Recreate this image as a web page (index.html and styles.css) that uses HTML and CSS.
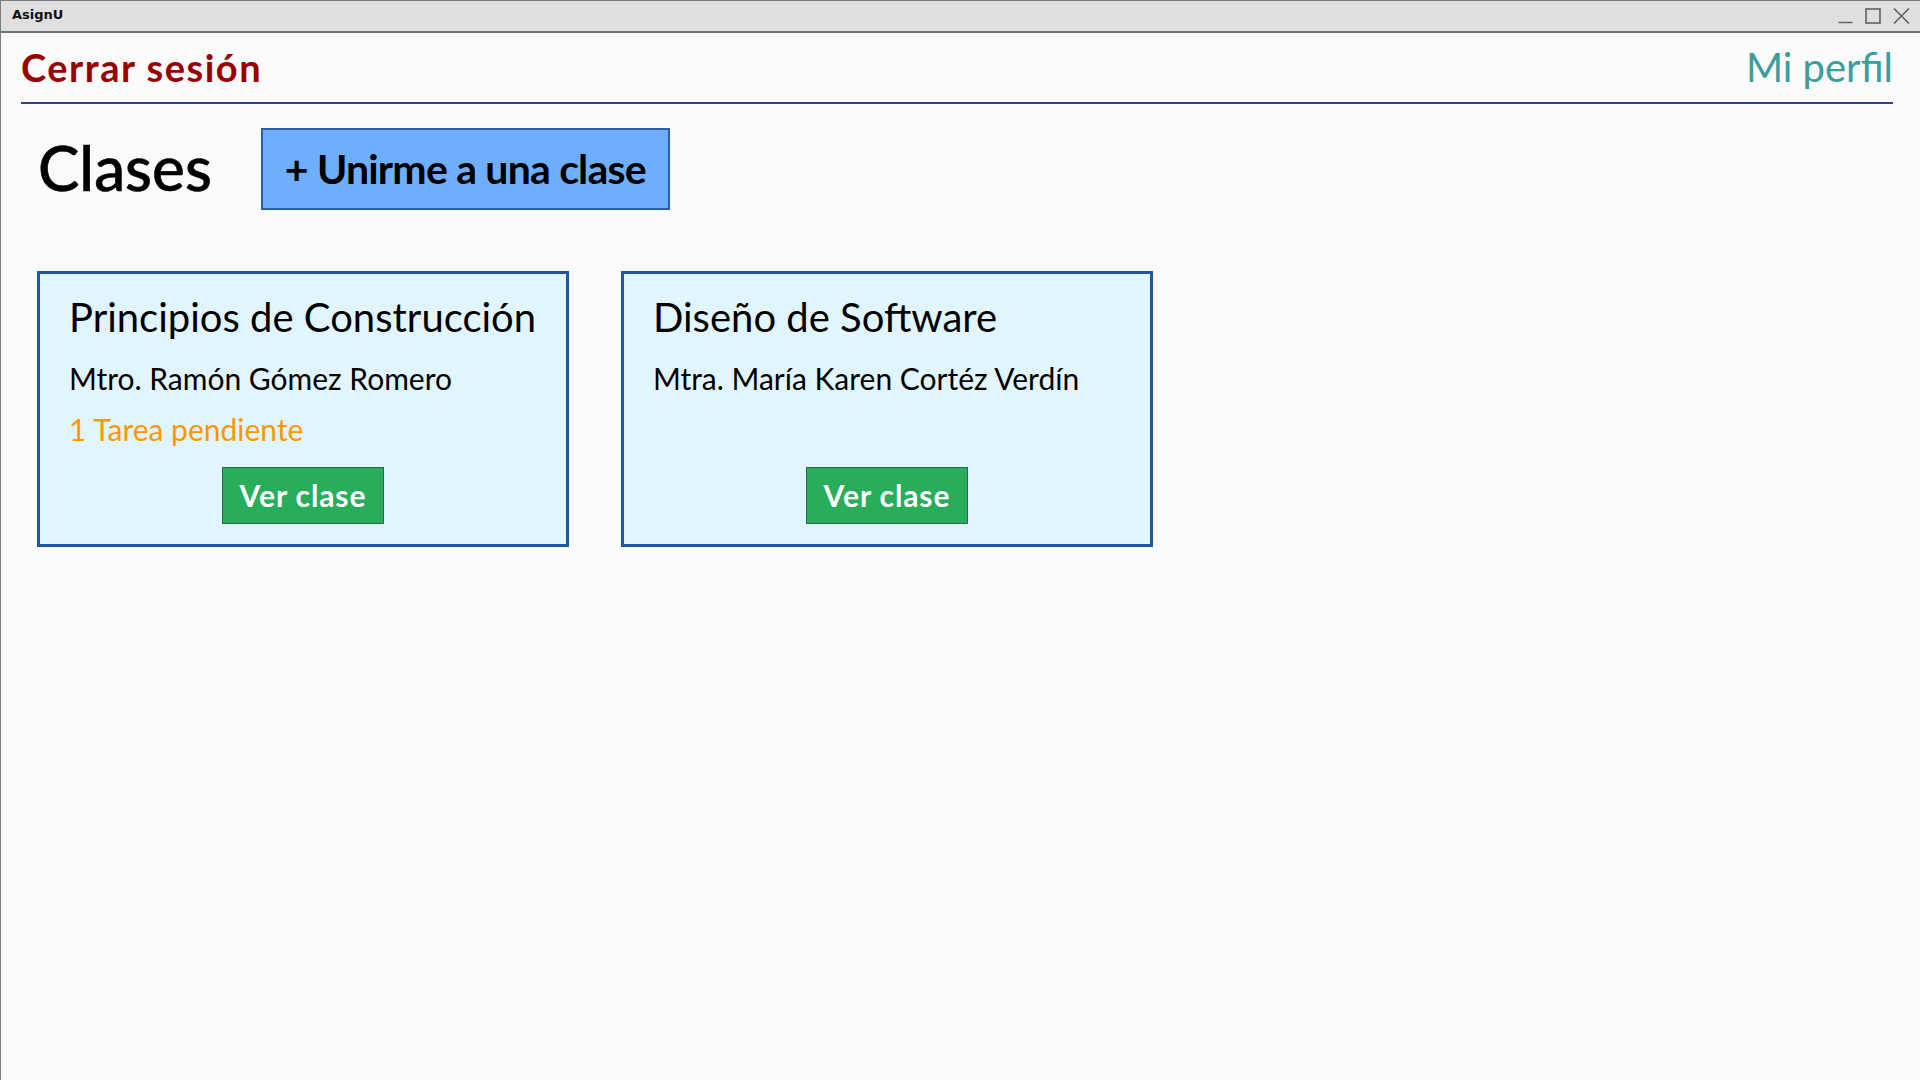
FILE: index.html
```html
<!DOCTYPE html>
<html lang="es">
<head>
<meta charset="utf-8">
<title>AsignU</title>
<link rel="stylesheet" href="styles.css">
</head>
<body>
<div class="window">
  <div class="titlebar">
    <span class="app-name">AsignU</span>
    <div class="controls">
      <svg class="ctl" width="15" height="16" viewBox="0 0 15 16"><line x1="0.5" y1="14.5" x2="14.5" y2="14.5" stroke="#5f5f5f" stroke-width="1.4"/></svg>
      <svg class="ctl" width="16" height="16" viewBox="0 0 16 16"><rect x="1" y="1" width="14" height="14" fill="none" stroke="#5f5f5f" stroke-width="1.6"/></svg>
      <svg class="ctl" width="17" height="16" viewBox="0 0 17 16"><path d="M1 0.5 L16 15.5 M16 0.5 L1 15.5" stroke="#5f5f5f" stroke-width="1.5" fill="none"/></svg>
    </div>
  </div>
  <header class="topbar">
    <a class="logout">Cerrar sesión</a>
    <a class="profile">Mi perfil</a>
  </header>
  <main class="main">
    <div class="heading-row">
      <h1 class="heading">Clases</h1>
      <button class="join-btn">+ Unirme a una clase</button>
    </div>
    <div class="cards">
      <section class="card">
        <h2 class="card-title">Principios de Construcción</h2>
        <p class="card-teacher">Mtro. Ramón Gómez Romero</p>
        <p class="card-pending">1 Tarea pendiente</p>
        <button class="view-btn">Ver clase</button>
      </section>
      <section class="card">
        <h2 class="card-title">Diseño de Software</h2>
        <p class="card-teacher">Mtra. María Karen Cortéz Verdín</p>
        <button class="view-btn">Ver clase</button>
      </section>
    </div>
  </main>
</div>
</body>
</html>
```
FILE: styles.css
```css
* { box-sizing: border-box; }
html, body {
  margin: 0;
  padding: 0;
  background: #fafafa;
  font-family: Lato, "Open Sans", sans-serif;
}
.window {
  width: 1920px;
  height: 1080px;
  border-left: 1px solid #7c7c7c;
  display: flex;
  flex-direction: column;
}
.titlebar {
  height: 33px;
  background: #dfdfdf;
  border-top: 1px solid #7a7a7a;
  border-bottom: 2px solid #717171;
  display: flex;
  align-items: center;
  justify-content: space-between;
  padding: 0 10px 0 11px;
}
.app-name {
  font-family: "DejaVu Sans", sans-serif;
  font-weight: bold;
  font-size: 13px;
  color: #111;
  margin-top: -3px;
}
.controls {
  display: flex;
  align-items: center;
  gap: 12px;
  margin-top: -1px;
}
.topbar {
  margin: 0 27px 0 20px;
  padding: 10px 0 11px;
  border-bottom: 2px solid #2d3f8e;
  display: flex;
  justify-content: space-between;
  align-items: baseline;
}
.logout {
  font-size: 38px;
  font-weight: bold;
  letter-spacing: 1.5px;
  color: #990000;
  line-height: 1.2;
}
.profile {
  font-size: 40px;
  color: #3a9e9a;
  line-height: 1.2;
}
.main {
  padding: 24px 36px 0;
}
.heading-row {
  display: flex;
  align-items: flex-start;
  gap: 49px;
}
.heading {
  margin: 2px 0 0 1px;
  font-size: 62px;
  font-weight: 500;
  line-height: 1.2;
  color: #000;
  -webkit-text-stroke: 0.6px #000;
}
.join-btn {
  font-family: Lato, sans-serif;
  font-size: 41px;
  font-weight: bold;
  letter-spacing: -0.8px;
  line-height: 1.2;
  color: #000;
  background: #6eaefc;
  border: 2px solid #2b5fa5;
  padding: 14px 22px;
  margin: 0;
  height: 82px;
}
.cards {
  display: flex;
  gap: 52px;
  margin-top: 61px;
}
.card {
  width: 532px;
  height: 276px;
  background: #e1f5fe;
  border: 3px solid #1e56a0;
  padding: 19px 29px 20px 29px;
  display: flex;
  flex-direction: column;
}
.card-title {
  margin: 0;
  font-size: 40px;
  font-weight: normal;
  line-height: 1.2;
  color: #000;
  white-space: nowrap;
}
.card-teacher {
  margin: 19px 0 0;
  font-size: 30px;
  line-height: 1.2;
  color: #000;
}
.card-pending {
  margin: 15px 0 0;
  font-size: 30px;
  line-height: 1.2;
  color: #ff9800;
}
.view-btn {
  margin: auto 0 0;
  align-self: center;
  font-family: Lato, sans-serif;
  font-size: 30px;
  font-weight: bold;
  letter-spacing: 0.9px;
  line-height: 35px;
  color: #fff;
  background: #28ad5a;
  border: 1px solid #2c6b41;
  padding: 10px 17px;
}
```
